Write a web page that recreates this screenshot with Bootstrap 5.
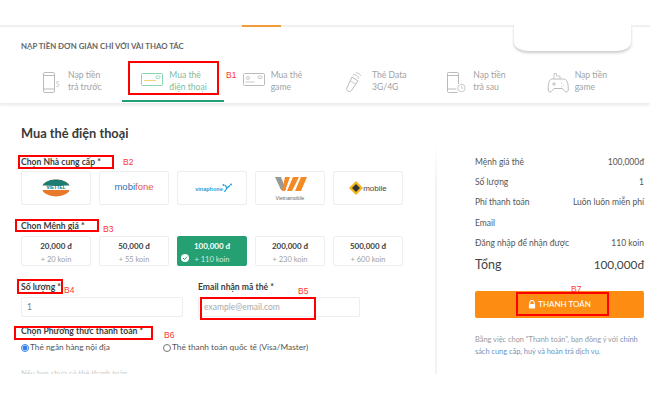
<!DOCTYPE html>
<html lang="vi">
<head>
    <meta charset="UTF-8">
    <title>Mua thẻ điện thoại</title>
    <link href="https://cdn.jsdelivr.net/npm/bootstrap@5.3.0/dist/css/bootstrap.min.css" rel="stylesheet">
    <style>
        html, body { height: 400px; overflow: hidden; background: #fff; }
        body { font-family: Lato, "Noto Sans", sans-serif; font-size: 10px; color: #444; position: relative; }
        .top-strip { height: 27px; border-bottom: 2px solid #f1f0ee; position: relative; }
        .top-accent { position: absolute; left: 242px; top: 25px; width: 39px; height: 2px; background: #f29b3c; }
        .pocket { position: absolute; left: 514px; top: 25px; width: 117px; height: 26px; background: #fff; border-radius: 0 0 14px 14px / 0 0 9px 9px; box-shadow: 0 2px 3px rgba(0,0,0,.2); z-index: 2; }
        .steps-box { height: 76px; padding: 13px 21px 0; box-shadow: 0 2px 3px rgba(80,60,40,.12); }
        .steps-title { font-size: 7.8px; font-weight: 700; color: #666; line-height: 12px; margin-bottom: 16px; }
        .step-tab { width: 103.6px; height: 34px; padding-left: 19px; gap: 6px; color: #a2a2a2; font-size: 8.6px; line-height: 12px; border-bottom: 2px solid transparent; padding-top: 1px; }
        .step-tab.is-on { color: #7fbd9f; border-bottom-color: #24a074; }
        .step-icon { width: 22px; height: 24px; flex: none; }
        .main-box { height: 271px; overflow: hidden; }
        .form-side { width: 437px; height: 271px; padding: 21px 0 0 21px; border-right: 2px solid #f3f3f3; border-image: linear-gradient(transparent 15%, #f3f3f3 30%) 1; overflow: hidden; }
        .page-title { font-size: 12.8px; font-weight: 700; color: #3a3a3a; line-height: 18px; margin: 0 0 14px; }
        .field-label { font-size: 8.6px; font-weight: 700; color: #3c3c3c; line-height: 13px; }
        .pick-box { width: 70px; background: #fff; border: 1px solid #eee; border-radius: 2px; text-align: center; }
        .logo-box { height: 34px; }
        .logo-box svg { width: 68px; height: 32px; }
        .price-box { height: 30px; position: relative; line-height: 12px; padding-top: 3px; }
        .price-box b { display: block; font-size: 8px; font-weight: 700; color: #3f3f3f; }
        .price-box span { font-size: 7.5px; color: #a0a0a0; }
        .price-box.is-on { background: #25a073; border-color: #25a073; }
        .price-box.is-on b { color: #fff; }
        .price-box.is-on span { color: #cfeadf; }
        .tick { position: absolute; left: 2px; bottom: 2px; width: 10px; height: 10px; }
        .text-field { width: 162px; height: 20px; border: 1px solid #eee; border-radius: 2px; padding: 0 5px; font-size: 8.5px; color: #777; background: #fff; font-family: inherit; outline: 0; }
        .text-field::placeholder { color: #aaa; opacity: 1; }
        .pay-radio { font-size: 8.3px; color: #555; line-height: 13px; gap: 1px; }
        .pay-radio.first-pick { width: 142px; }
        .pay-radio input { width: 8px; height: 8px; margin: 0; accent-color: #2f80ed; }
        .faded-line { margin-top: 13px; font-size: 7.5px; color: #ccc; line-height: 13px; }
        .sum-side { width: 213px; padding: 49px 6px 0 38px; }
        .sum-row { height: 20.2px; line-height: 20px; font-size: 8.5px; color: #555; }
        .sum-total { line-height: 20px; color: #444; margin-top: 2px; font-size: 12.5px; }
        .sum-total span + span { font-size: 11.8px; }
        .pay-btn { height: 27px; margin-top: 16px; width: 100%; background: #fd8c13; border: 0; border-radius: 2px; color: #fff; font-size: 8px; font-weight: 500; padding: 0; gap: 2px; }
        .pay-btn:hover { background: #fd8c13; color: #fff; }
        .pay-note { margin: 16px 0 0; font-size: 7.4px; line-height: 12px; color: #999; }
        .pay-note a { color: #6d93c0; text-decoration: none; }
        .red-box { position: absolute; border: 2px solid #f00; pointer-events: none; z-index: 5; }
        .red-tag { position: absolute; color: #f33; font-size: 8.5px; line-height: 10px; font-family: "Liberation Sans", sans-serif; z-index: 5; }
    </style>
</head>
<body>
<div class="top-strip"><div class="top-accent"></div></div>
<div class="pocket"></div>

<div class="steps-box">
    <div class="steps-title">NẠP TIỀN ĐƠN GIẢN CHỈ VỚI VÀI THAO TÁC</div>
    <div class="d-flex">
        <div class="step-tab d-flex">
            <svg class="step-icon" viewBox="0 0 22 24" fill="none" stroke="#bbb"><rect x="3.5" y="3.5" width="11" height="20" rx="1.5"/><path d="M3.5 6.5h11M3.5 20h11"/><path d="M19 13c-2-1-3 0-2.600 1s2.600 1 2.600 2.200-1.600 1.600-2.800 1" stroke-width=".8"/></svg>
            <div>Nạp tiền<br>trả trước</div>
        </div>
        <div class="step-tab is-on d-flex">
            <svg class="step-icon" viewBox="0 0 22 24" fill="none"><rect x=".5" y="4.500" width="21" height="12" rx="1" stroke="#86d6b2"/><path d="M3 11.500h12" stroke="#f0d580"/><rect x="15" y="7" width="4" height="2.500" rx="1" stroke="#86d6b2" stroke-width=".8"/></svg>
            <div>Mua thẻ<br>điện thoại</div>
        </div>
        <div class="step-tab d-flex">
            <svg class="step-icon" viewBox="0 0 22 24" fill="none" stroke="#bbb"><rect x=".5" y="4.500" width="21" height="12" rx="1"/><circle cx="5" cy="9" r="1.500" stroke-width=".8"/><path d="M2.500 13h9" stroke-width=".8"/><rect x="15" y="7" width="4" height="2.500" rx="1" stroke-width=".8"/></svg>
            <div>Mua thẻ<br>game</div>
        </div>
        <div class="step-tab d-flex">
            <svg class="step-icon" viewBox="0 0 22 24" fill="none" stroke="#bbb"><path d="M8 8l6 4-6.500 9.500c-1 1.300-2.500 1.300-3.700.5s-1.500-2-.8-3.300z"/><path d="M6 11.500l6 4M9 6.500l1-1.500 5 3.300-1 1.600M12 3.500c2 .3 4 1.500 5 3.500" stroke-width=".8"/></svg>
            <div>Thẻ Data<br>3G/4G</div>
        </div>
        <div class="step-tab d-flex">
            <svg class="step-icon" viewBox="0 0 22 24" fill="none" stroke="#bbb"><path d="M13.500 15V4.500a1 1 0 0 0-1-1h-9a1 1 0 0 0-1 1v18a1 1 0 0 0 1 1h9"/><path d="M2.500 6.500h11M2.500 20h9"/><circle cx="16.500" cy="19" r="3.700" stroke-width=".8"/><path d="M16.500 17v2.200h1.700" stroke-width=".7"/></svg>
            <div>Nạp tiền<br>trả sau</div>
        </div>
        <div class="step-tab d-flex">
            <svg class="step-icon" viewBox="0 0 22 24" fill="none" stroke="#bbb"><path d="M5.500 10h11c2.500 0 4 2 4.500 6s.5 7-1.500 7c-2 0-3-3-4.500-3.500h-8C6 20 5 23 3 23s-2-3-1.500-7S3 10 5.500 10z"/><path d="M7 10V4.500h2.500V7h3.500v3" stroke-width=".8"/><path d="M5 15h4M7 13v4M14 14h.8M16.500 16h.8M14 17.500h.8" stroke-width=".9"/></svg>
            <div>Nạp tiền<br>game</div>
        </div>
    </div>
</div>

<div class="main-box d-flex">
    <div class="form-side">
        <h1 class="page-title">Mua thẻ điện thoại</h1>

        <div class="field-label" style="margin-bottom:2px">Chọn Nhà cung cấp *</div>
        <div class="d-flex gap-2 logo-row">
            <div class="pick-box logo-box">
                <svg viewBox="0 0 68 32">
                    <ellipse cx="34" cy="16" rx="14" ry="8.500" fill="#e8792b"/>
                    <path d="M20 16a14 8.500 0 0 1 28 0z" fill="#1d7d74"/>
                    <rect x="20" y="13.500" width="28" height="4.500" fill="#fff"/>
                    <text x="34" y="17.400" text-anchor="middle" font-size="4.600" font-weight="700" fill="#17695f" font-family="Liberation Sans">VIETTEL</text>
                </svg>
            </div>
            <div class="pick-box logo-box">
                <svg viewBox="0 0 68 32">
                    <text x="34" y="18" text-anchor="middle" font-size="9.500" fill="#2a6fb8" font-family="Liberation Sans">mobi<tspan fill="#e2574c">fone</tspan></text>
                </svg>
            </div>
            <div class="pick-box logo-box">
                <svg viewBox="0 0 68 32">
                    <text x="31" y="19" text-anchor="middle" font-size="5.500" font-weight="700" fill="#1aa3e0" font-family="Liberation Sans">vinaphone</text>
                    <path d="M47 13l2 3 3-2.500M49 16l-2.500 4" stroke="#1aa3e0" stroke-width="1.300" fill="none"/>
                    <circle cx="45.500" cy="13" r="1" fill="#1aa3e0"/><circle cx="53" cy="12.500" r="1" fill="#1aa3e0"/>
                </svg>
            </div>
            <div class="pick-box logo-box">
                <svg viewBox="0 0 68 32">
                    <path d="M19 5h6l5 13h-5z" fill="#999"/>
                    <path d="M29 5h5l-5 14h-3zM37 5h6l-7 14h-5zM45 5h6l-6 14h-6z" fill="#f58a25"/>
                    <text x="34" y="28" text-anchor="middle" font-size="5" fill="#666" font-family="Liberation Sans">Vietnamobile</text>
                </svg>
            </div>
            <div class="pick-box logo-box">
                <svg viewBox="0 0 68 32" fill="none">
                    <path d="M22 10.500l5.500 5.500-5.500 5.500-5.500-5.500z" fill="#333" stroke="#f3b61f" stroke-width="2.200"/>
                    <text x="41" y="18.500" text-anchor="middle" font-size="8" fill="#444" font-family="Liberation Sans">mobile</text>
                </svg>
            </div>
        </div>

        <div class="field-label" style="margin-top:15px;margin-bottom:3px">Chọn Mệnh giá *</div>
        <div class="d-flex gap-2">
            <div class="pick-box price-box"><b>20,000 đ</b><span>+ 20 koin</span></div>
            <div class="pick-box price-box"><b>50,000 đ</b><span>+ 55 koin</span></div>
            <div class="pick-box price-box is-on">
                <b>100,000 đ</b><span>+ 110 koin</span>
                <svg class="tick" viewBox="0 0 10 10"><circle cx="5" cy="5" r="4" fill="#fff"/><path d="M3 5l1.500 1.500L7 3.800" stroke="#25a073" fill="none"/></svg>
            </div>
            <div class="pick-box price-box"><b>200,000 đ</b><span>+ 230 koin</span></div>
            <div class="pick-box price-box"><b>500,000 đ</b><span>+ 600 koin</span></div>
        </div>

        <div class="d-flex" style="gap:15px;margin-top:15px">
            <div>
                <div class="field-label" style="margin-bottom:3px">Số lượng *</div>
                <input class="text-field" type="text" value="1">
            </div>
            <div>
                <div class="field-label" style="margin-bottom:3px">Email nhận mã thẻ *</div>
                <input class="text-field" type="text" placeholder="example@email.com">
            </div>
        </div>

        <div class="field-label" style="margin-top:8px;margin-bottom:3px">Chọn Phương thức thanh toán *</div>
        <div class="d-flex">
            <label class="pay-radio first-pick d-flex align-items-center"><input type="radio" name="pay" checked> Thẻ ngân hàng nội địa</label>
            <label class="pay-radio d-flex align-items-center"><input type="radio" name="pay"> Thẻ thanh toán quốc tế (Visa/Master)</label>
        </div>
        <div class="faded-line">Nếu bạn chưa có thẻ thanh toán</div>
    </div>

    <aside class="sum-side">
        <div class="sum-row d-flex justify-content-between"><span>Mệnh giá thẻ</span><span>100,000đ</span></div>
        <div class="sum-row d-flex justify-content-between"><span>Số lượng</span><span>1</span></div>
        <div class="sum-row d-flex justify-content-between"><span>Phí thanh toán</span><span>Luôn luôn miễn phí</span></div>
        <div class="sum-row d-flex justify-content-between"><span>Email</span><span></span></div>
        <div class="sum-row d-flex justify-content-between"><span>Đăng nhập để nhận được</span><span>110 koin</span></div>
        <div class="sum-total d-flex justify-content-between"><span>Tổng</span><span>100,000đ</span></div>
        <button class="btn pay-btn d-flex align-items-center justify-content-center" type="button">
            <svg width="8" height="9" viewBox="0 0 9 10"><path d="M2 4.500V3a2.500 2.500 0 0 1 5 0v1.500" fill="none" stroke="#fff" stroke-width="1.200"/><rect x="1" y="4.500" width="7" height="5" rx=".8" fill="#fff"/></svg>
            THANH TOÁN
        </button>
        <p class="pay-note">Bằng việc chọn "Thanh toán", bạn đồng ý với <a href="#">chính sách cung cấp, huỷ và hoàn trả dịch vụ.</a></p>
    </aside>
</div>

<!-- annotations drawn over the screenshot -->
<div class="red-box" style="left:128px;top:61px;width:91px;height:34px"></div>
<div class="red-tag" style="left:226px;top:70px">B1</div>
<div class="red-box" style="left:18px;top:155px;width:96px;height:14px"></div>
<div class="red-tag" style="left:123px;top:157px">B2</div>
<div class="red-box" style="left:15px;top:219px;width:84px;height:13px"></div>
<div class="red-tag" style="left:103px;top:224px">B3</div>
<div class="red-box" style="left:17px;top:279px;width:46px;height:15px"></div>
<div class="red-tag" style="left:64px;top:285px">B4</div>
<div class="red-box" style="left:200px;top:297px;width:116px;height:23px"></div>
<div class="red-tag" style="left:298px;top:286px">B5</div>
<div class="red-box" style="left:14px;top:326px;width:139px;height:14px"></div>
<div class="red-tag" style="left:164px;top:330px">B6</div>
<div class="red-box" style="left:516px;top:292px;width:93px;height:24px"></div>
<div class="red-tag" style="left:571px;top:284px">B7</div>

<script src="https://cdn.jsdelivr.net/npm/bootstrap@5.3.0/dist/js/bootstrap.bundle.min.js"></script>
</body>
</html>
